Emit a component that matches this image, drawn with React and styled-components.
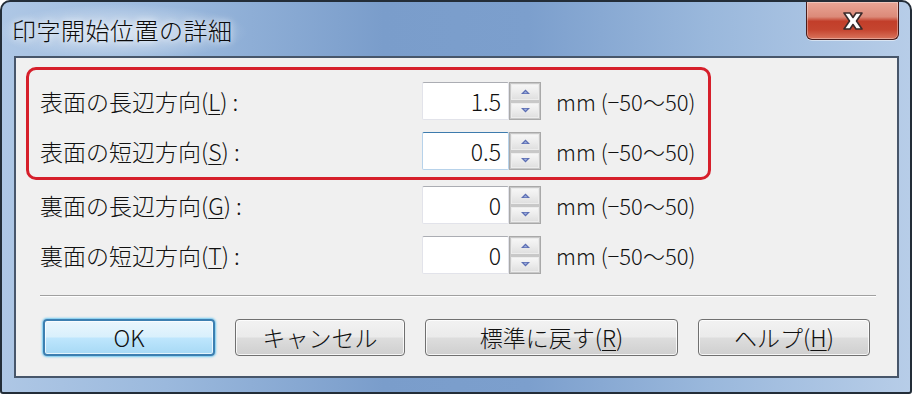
import React from "react";
import styled, { createGlobalStyle, css } from "styled-components";

const Global = createGlobalStyle`
  html, body { margin: 0; padding: 0; background: #ffffff; }
  body { font-family: "Noto Sans CJK JP", "Noto Sans", sans-serif; font-weight: 300; }
  * { box-sizing: border-box; }
`;

const Window = styled.div`
  width: 912px;
  height: 394px;
  border: 2px solid #232d38;
  border-radius: 10px 10px 3px 3px;
  background:
    radial-gradient(ellipse 180px 40px at 120px 30px, rgba(255,255,255,0.55), rgba(255,255,255,0) 70%),
    linear-gradient(90deg, #aec7e5 0%, #9bb9dd 18%, #7a9dcb 42%, #7c9fcd 58%, #9ab8dc 78%, #b7cde8 100%);
  display: flex;
  flex-direction: column;
  overflow: hidden;
`;

const TitleBar = styled.div`
  height: 54px;
  display: flex;
  align-items: flex-start;
  padding-left: 10px;
`;

const Title = styled.div`
  font-size: 24px;
  line-height: 1;
  margin-top: 16px;
  color: #0b0b0b;
  letter-spacing: 0.5px;
  text-shadow: 0 0 6px rgba(255,255,255,0.9), 0 0 12px rgba(255,255,255,0.6);
`;

const CloseButton = styled.div`
  margin-left: auto;
  margin-right: 11px;
  width: 93px;
  height: 38px;
  border: 1px solid #4a1c1a;
  border-top: none;
  border-radius: 0 0 6px 6px;
  background: linear-gradient(180deg, #e9a697 0%, #dc8a79 40%, #c23e2a 52%, #c5452f 75%, #d9745c 100%);
  box-shadow: inset 0 0 0 1px rgba(255,255,255,0.35), 0 1px 0 rgba(255,255,255,0.5);
  display: flex;
  align-items: center;
  justify-content: center;
`;

const Client = styled.div`
  margin: 0 11px 14px 12px;
  flex: 1;
  border: 2px solid #47566a;
  background: #f0f0f0;
  display: flex;
  flex-direction: column;
`;

const Form = styled.div`
  padding: 9px 0 0 10px;
  display: flex;
  flex-direction: column;
`;

const Highlight = styled.div`
  width: 685px;
  border: 3px solid #d61f2b;
  border-radius: 10px;
  padding: 6px 0 1px 11px;
`;

const PlainRows = styled.div`
  padding-left: 14px;
`;

const Row = styled.div`
  height: 50px;
  display: flex;
  align-items: center;
`;

const Label = styled.div`
  width: 382px;
  font-size: 23px;
  line-height: 1;
  color: #111;
  white-space: nowrap;
`;

const Key = styled.span`
  text-decoration: underline;
  text-underline-offset: 3px;
  text-decoration-thickness: 1px;
`;

const NumberBox = styled.div`
  width: 87px;
  height: 38px;
  background: #ffffff;
  border: 1px solid ${(p) => (p.$focused ? "#b7d2ea" : "#e2e3ea")};
  border-top-color: ${(p) => (p.$focused ? "#3d7bad" : "#abadb3")};
  border-radius: 2px;
  display: flex;
  align-items: center;
  justify-content: flex-end;
  padding-right: 7px;
  font-size: 23px;
  line-height: 1;
  color: #111;
`;

const Spinner = styled.div`
  width: 32px;
  height: 38px;
  border: 1px solid #a9a9a9;
  background: #c8c8c8;
  display: flex;
  flex-direction: column;
  padding: 1px;
  gap: 3px;
`;

const SpinHalf = styled.div`
  flex: 1;
  border: 1px solid #ececec;
  background: linear-gradient(180deg, #f6f6f6 0%, #ececec 50%, #e0e0e0 100%);
  display: flex;
  align-items: center;
  justify-content: center;
`;

const Unit = styled.div`
  margin-left: 15px;
  font-size: 22px;
  line-height: 1;
  color: #111;
  white-space: nowrap;
`;

const Separator = styled.div`
  margin: 15px 21px 0 24px;
  height: 2px;
  border-top: 1px solid #a0a0a0;
  border-bottom: 1px solid #ffffff;
`;

const ButtonRow = styled.div`
  margin-top: 22px;
  padding-left: 27px;
  display: flex;
  gap: 20px;
`;

const Button = styled.div`
  width: ${(p) => p.$w}px;
  height: 37px;
  border: 1px solid #707070;
  border-radius: 4px;
  background: linear-gradient(180deg, #f2f2f2 0%, #ebebeb 48%, #dddddd 52%, #cfcfcf 100%);
  box-shadow: inset 0 0 0 1px rgba(255,255,255,0.8);
  display: flex;
  align-items: center;
  justify-content: center;
  font-size: 23px;
  line-height: 1;
  color: #111;
  ${(p) =>
    p.$default &&
    css`
      border: 2px solid #3c7fb1;
      background: linear-gradient(180deg, #eaf6fd 0%, #d9f0fc 48%, #bee6fd 52%, #a7d9f5 100%);
      box-shadow: 0 0 2px 1px rgba(80, 190, 240, 0.8), inset 0 0 0 1px rgba(255,255,255,0.7);
    `}
`;

const ArrowUp = () => (
  <svg width="9" height="5" viewBox="0 0 9 5">
    <polygon points="0,5 4.5,0.5 9,5" fill="#5b6db2" />
    <polygon points="2.5,4.2 4.5,2.2 6.5,4.2" fill="#9fb0e0" />
  </svg>
);

const ArrowDown = () => (
  <svg width="9" height="5" viewBox="0 0 9 5">
    <polygon points="0,0 4.5,4.5 9,0" fill="#5b6db2" />
    <polygon points="2.5,0.8 4.5,2.8 6.5,0.8" fill="#9fb0e0" />
  </svg>
);

const CloseX = () => (
  <svg width="26" height="20" viewBox="0 0 26 20">
    <path
      d="M4 2 L10 2 L13 6.5 L16 2 L22 2 L16.5 10 L22 18 L16 18 L13 13.5 L10 18 L4 18 L9.5 10 Z"
      fill="#ffffff"
      stroke="#3a2a2a"
      strokeWidth="1.6"
      strokeLinejoin="round"
    />
  </svg>
);

const FieldRow = ({ label, k, value, focused }) => (
  <Row>
    <Label>
      {label}(<Key>{k}</Key>) :
    </Label>
    <NumberBox $focused={focused}>{value}</NumberBox>
    <Spinner>
      <SpinHalf>
        <ArrowUp />
      </SpinHalf>
      <SpinHalf>
        <ArrowDown />
      </SpinHalf>
    </Spinner>
    <Unit>mm (−50〜50)</Unit>
  </Row>
);

export default function App() {
  return (
    <>
      <Global />
      <Window>
        <TitleBar>
          <Title>印字開始位置の詳細</Title>
          <CloseButton>
            <CloseX />
          </CloseButton>
        </TitleBar>
        <Client>
          <Form>
            <Highlight>
              <FieldRow label="表面の長辺方向" k="L" value="1.5" />
              <FieldRow label="表面の短辺方向" k="S" value="0.5" focused />
            </Highlight>
            <PlainRows>
              <FieldRow label="裏面の長辺方向" k="G" value="0" />
              <FieldRow label="裏面の短辺方向" k="T" value="0" />
            </PlainRows>
          </Form>
          <Separator />
          <ButtonRow>
            <Button $w={172} $default>OK</Button>
            <Button $w={170}>キャンセル</Button>
            <Button $w={253}>
              標準に戻す(<Key>R</Key>)
            </Button>
            <Button $w={172}>
              ヘルプ(<Key>H</Key>)
            </Button>
          </ButtonRow>
        </Client>
      </Window>
    </>
  );
}
